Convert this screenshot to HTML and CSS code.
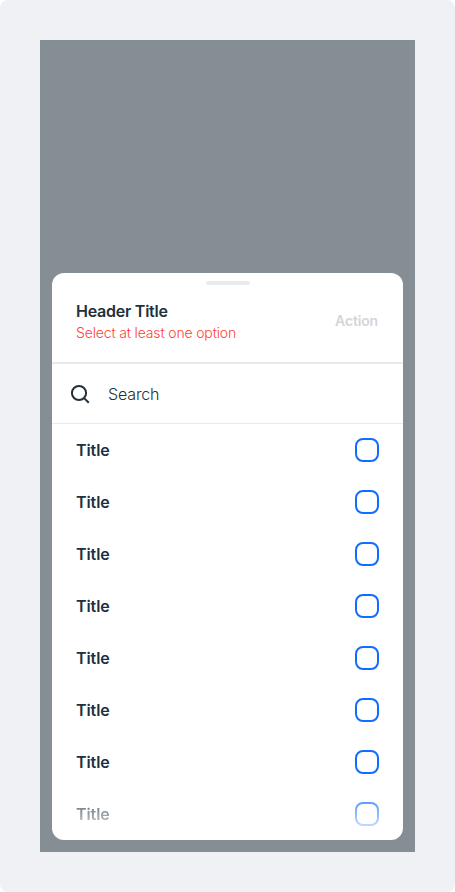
FILE: index.html
```html
<!DOCTYPE html>
<html lang="en">
<head>
  <meta charset="UTF-8">
  <title>Select options</title>
  <link rel="stylesheet" href="styles.css">
</head>
<body>

  <main class="canvas">
    <div class="screen">
      <section class="sheet">
        <div class="handle"></div>

        <header class="header">
          <div>
            <h1 class="header-title">Header Title</h1>
            <p class="error">Select at least one option</p>
          </div>
          <button class="action" type="button" disabled>Action</button>
        </header>

        <div class="search">
          <svg class="search-icon" viewBox="0 0 24 24" width="24" height="24">
            <circle cx="10" cy="11" r="7.1"/>
            <path d="M15.1 16.1L19.8 20.8"/>
          </svg>
          <span class="search-text">Search</span>
        </div>

        <ul class="list">
          <li class="row"><span class="title">Title</span><span class="checkbox"></span></li>
          <li class="row"><span class="title">Title</span><span class="checkbox"></span></li>
          <li class="row"><span class="title">Title</span><span class="checkbox"></span></li>
          <li class="row"><span class="title">Title</span><span class="checkbox"></span></li>
          <li class="row"><span class="title">Title</span><span class="checkbox"></span></li>
          <li class="row"><span class="title">Title</span><span class="checkbox"></span></li>
          <li class="row"><span class="title">Title</span><span class="checkbox"></span></li>
          <li class="row"><span class="title">Title</span><span class="checkbox"></span></li>
        </ul>
      </section>
    </div>
  </main>

</body>
</html>
```
FILE: styles.css
```css
* {
  box-sizing: border-box;
}

body {
  margin: 0;
  background-color: #fff;
  font-family: Inter, "Open Sans", sans-serif;
  color: #20303c;
}

.canvas {
  height: 892px;
  padding: 40px;
  background-color: #f0f1f5;
  border-radius: 8px;
}

.screen {
  display: flex;
  align-items: flex-end;
  height: 812px;
  padding: 12px;
  background-color: #868e95;
}

.sheet {
  width: 351px;
  height: 567px;
  background-color: #fff;
  border-radius: 12px;
  overflow: hidden;
}

.handle {
  width: 44px;
  height: 4px;
  margin: 8px auto 0;
  background-color: #e7eaef;
  border-radius: 2px;
}

.header {
  display: flex;
  justify-content: space-between;
  align-items: center;
  height: 79px;
  padding: 0 25px 6px 24px;
  border-bottom: 2px solid #e7eaef;
}

.header-title {
  margin: 0;
  font-size: 16px;
  font-weight: 600;
  line-height: 24px;
  letter-spacing: -0.25px;
}

.error {
  margin: 0;
  font-size: 14px;
  font-weight: 300;
  line-height: 20px;
  letter-spacing: -0.15px;
  color: #ff4037;
}

.action {
  padding: 0;
  border: none;
  background: none;
  font-family: inherit;
  font-size: 14px;
  font-weight: 600;
  letter-spacing: -0.15px;
  color: #d2d6d9;
}

.search {
  display: flex;
  align-items: center;
  gap: 15px;
  height: 60px;
  padding-left: 17px;
  border-bottom: 1px solid #e7eaef;
}

.search-icon {
  fill: none;
  stroke: #20303c;
  stroke-width: 2;
}

.search-text {
  font-size: 16px;
  font-weight: 300;
  letter-spacing: -0.15px;
}

.list {
  margin: 0;
  padding: 0;
  list-style: none;
}

.row {
  display: flex;
  justify-content: space-between;
  align-items: center;
  height: 52px;
  padding: 0 24px;
}

/* last row fades out at the bottom of the sheet */
.row:last-child {
  -webkit-mask-image: linear-gradient(rgba(0, 0, 0, 0.92), rgba(0, 0, 0, 0.02));
  mask-image: linear-gradient(rgba(0, 0, 0, 0.92), rgba(0, 0, 0, 0.02));
}

.title {
  font-size: 16px;
  font-weight: 600;
  letter-spacing: -0.1px;
}

.checkbox {
  width: 24px;
  height: 24px;
  border: 2px solid #116dff;
  border-radius: 8px;
}
```
